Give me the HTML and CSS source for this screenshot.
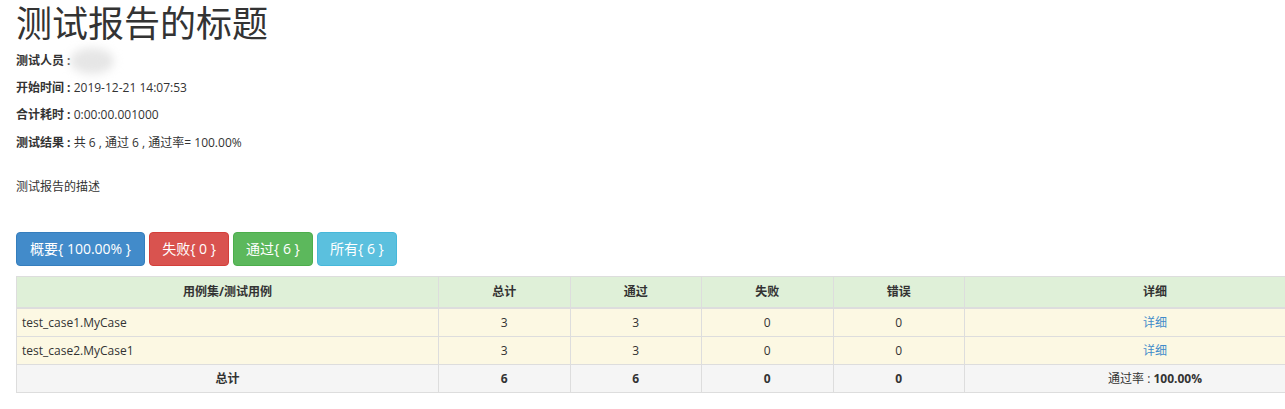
FILE: index.html
```html
<!DOCTYPE html>
<html lang="zh-CN">
<head>
    <meta charset="UTF-8">
    <meta name="viewport" content="width=device-width, initial-scale=1.0">
    <title>测试报告的标题</title>
    <link rel="stylesheet" href="styles.css">
</head>
<body>
    <div class="report">
        <!-- Header -->
        <h1>测试报告的标题</h1>
        <p class="attr"><strong>测试人员 : </strong><span class="masked"></span></p>
        <p class="attr"><strong>开始时间 : </strong>2019-12-21 14:07:53</p>
        <p class="attr"><strong>合计耗时 : </strong>0:00:00.001000</p>
        <p class="attr"><strong>测试结果 : </strong>共 6 , 通过 6 , 通过率= 100.00%</p>
        <p class="description">测试报告的描述</p>

        <!-- Filter buttons -->
        <div class="filters">
            <a class="btn btn-primary">概要{ 100.00% }</a>
            <a class="btn btn-danger">失败{ 0 }</a>
            <a class="btn btn-success">通过{ 6 }</a>
            <a class="btn btn-info">所有{ 6 }</a>
        </div>

        <!-- Result table -->
        <table class="result">
            <thead>
                <tr>
                    <th class="col-name">用例集/测试用例</th>
                    <th class="col-num">总计</th>
                    <th class="col-num">通过</th>
                    <th class="col-num">失败</th>
                    <th class="col-num">错误</th>
                    <th class="col-detail">详细</th>
                </tr>
            </thead>
            <tbody>
                <tr class="case-row">
                    <td class="name">test_case1.MyCase</td>
                    <td>3</td>
                    <td>3</td>
                    <td>0</td>
                    <td>0</td>
                    <td><a href="#">详细</a></td>
                </tr>
                <tr class="case-row">
                    <td class="name">test_case2.MyCase1</td>
                    <td>3</td>
                    <td>3</td>
                    <td>0</td>
                    <td>0</td>
                    <td><a href="#">详细</a></td>
                </tr>
                <tr class="total-row">
                    <td>总计</td>
                    <td>6</td>
                    <td>6</td>
                    <td>0</td>
                    <td>0</td>
                    <td><span class="rate-label">通过率 : </span>100.00%</td>
                </tr>
            </tbody>
        </table>
    </div>
</body>
</html>
```

FILE: styles.css
```css
/* General Styles */
html, body {
    overflow: hidden;
}

body {
    margin: 0;
    font-family: "Open Sans", "Noto Sans CJK SC", sans-serif;
    font-size: 12px;
    line-height: 1.42857;
    color: #333;
    background: #fff;
}

.report {
    padding: 0 16px;
}

h1 {
    margin: 0 0 9px;
    font-family: "Noto Sans CJK SC", sans-serif;
    font-size: 36px;
    font-weight: 400;
    line-height: 1.2;
    color: #333;
}

p {
    margin: 0 0 10px;
}

.attr strong {
    font-weight: bold;
}

.masked {
    display: inline-block;
    width: 44px;
    height: 26px;
    margin: -8px 0 -6px -4px;
    vertical-align: middle;
    background: #e6e6e6;
    border-radius: 50%;
    filter: blur(5px);
}

.description {
    margin: 27px 0 37px;
}

/* Buttons */
.filters {
    margin-bottom: 10px;
}

.btn {
    display: inline-block;
    margin-right: 1px;
    padding: 6px 12px;
    font-size: 14px;
    line-height: 1.42857;
    color: #fff;
    border: 1px solid transparent;
    border-radius: 4px;
    cursor: pointer;
}

.btn-primary {
    padding: 6px 13px;
    background: #428bca;
    border-color: #357ebd;
}

.btn-danger {
    background: #d9534f;
    border-color: #d43f3a;
}

.btn-success {
    background: #5cb85c;
    border-color: #4cae4c;
}

.btn-info {
    background: #5bc0de;
    border-color: #46b8da;
}

/* Table */
.result {
    width: 1330px;
    border-collapse: collapse;
    border: 1px solid #ddd;
}

.result th,
.result td {
    padding: 5px;
    border: 1px solid #ddd;
    text-align: center;
    line-height: 1.42857;
}

.result th {
    padding: 6px 5px 7px;
    border-bottom-width: 2px;
    background: #dff0d8;
    font-weight: bold;
}

.col-name {
    width: 411px;
}

.col-num {
    width: 120.5px;
}

.case-row td {
    background: #fcf8e3;
}

.case-row td.name {
    text-align: left;
}

.total-row td {
    background: #f5f5f5;
    font-weight: bold;
}

.rate-label {
    font-weight: normal;
}

a {
    color: #428bca;
    text-decoration: none;
}
```
